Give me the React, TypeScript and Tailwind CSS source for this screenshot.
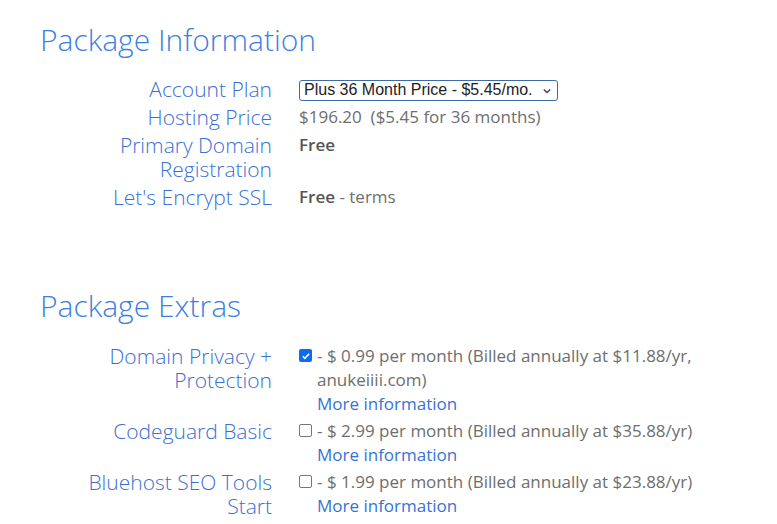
import { useState } from 'react';

const extras = [
  {
    id: 'privacy',
    label: ['Domain Privacy +', 'Protection'],
    text: '- $ 0.99 per month (Billed annually at $11.88/yr, anukeiiii.com)',
    checked: true,
  },
  {
    id: 'codeguard',
    label: ['Codeguard Basic'],
    text: '- $ 2.99 per month (Billed annually at $35.88/yr)',
    checked: false,
  },
  {
    id: 'seo',
    label: ['Bluehost SEO Tools', 'Start'],
    text: '- $ 1.99 per month (Billed annually at $23.88/yr)',
    checked: false,
  },
];

function Row({ label, children }: { label: React.ReactNode; children: React.ReactNode }) {
  return (
    <div className="flex items-start">
      <div className="w-[232px] shrink-0 text-right text-[21px] leading-[24px] font-light text-[#3a70d4]">{label}</div>
      <div className="ml-[27px] w-[410px] text-[17px] leading-[24px] text-[#6e6e6e]">{children}</div>
    </div>
  );
}

function Box({ checked, onClick }: { checked: boolean; onClick: () => void }) {
  return (
    <button
      onClick={onClick}
      className={`mt-[5px] flex h-[13px] w-[13px] shrink-0 items-center justify-center rounded-[2px] ${
        checked ? 'bg-[#0b6cf0]' : 'border border-[#767676] bg-white'
      }`}
    >
      {checked && (
        <svg viewBox="0 0 12 12" className="h-[10px] w-[10px]">
          <path d="M2.2 6.3l2.4 2.4 5.2-5.4" fill="none" stroke="white" strokeWidth="2" />
        </svg>
      )}
    </button>
  );
}

export default function App() {
  const [checks, setChecks] = useState(extras.map(e => e.checked));

  return (
    <div className="min-h-[524px] bg-white pl-[40px] pt-[20px]" style={{ fontFamily: '"Open Sans", sans-serif' }}>
      <h2 className="text-[30px] leading-[40px] font-light text-[#3d7fe0]">Package Information</h2>

      <div className="mt-[17px] flex flex-col gap-[4px]">
        <Row label="Account Plan">
          <div className="relative inline-flex h-[21px] w-[259px] items-center rounded-[3px] border border-[#3c6aa8] pl-[4px]">
            <span className="text-[16px] leading-[18px] text-[#222]" style={{ fontFamily: '"Liberation Sans", Arial, sans-serif' }}>
              Plus 36 Month Price - $5.45/mo.
            </span>
            <svg viewBox="0 0 10 10" className="absolute right-[6px] top-[6px] h-[8px] w-[8px]">
              <path d="M1 3l4 4 4-4" fill="none" stroke="#444" strokeWidth="1.8" />
            </svg>
          </div>
        </Row>
        <Row label="Hosting Price">$196.20&nbsp; ($5.45 for 36 months)</Row>
        <Row label={<>Primary Domain<br />Registration</>}>
          <span className="font-semibold text-[#555]">Free</span>
        </Row>
        <Row label="Let's Encrypt SSL">
          <span className="font-semibold text-[#555]">Free</span> - terms
        </Row>
      </div>

      <h2 className="mt-[77px] text-[30px] leading-[40px] font-light text-[#3d7fe0]">Package Extras</h2>

      <div className="mt-[18px] flex flex-col gap-[3px]">
        {extras.map((e, i) => (
          <Row
            key={e.id}
            label={e.label.map((l, j) => (
              <div key={j}>{l}</div>
            ))}
          >
            <div className="flex gap-[5px]">
              <Box checked={checks[i]} onClick={() => setChecks(c => c.map((v, k) => (k === i ? !v : v)))} />
              <div className="w-[390px]">
                <div>{e.text}</div>
                <div className="text-[#3573d4]">More information</div>
              </div>
            </div>
          </Row>
        ))}
      </div>
    </div>
  );
}
